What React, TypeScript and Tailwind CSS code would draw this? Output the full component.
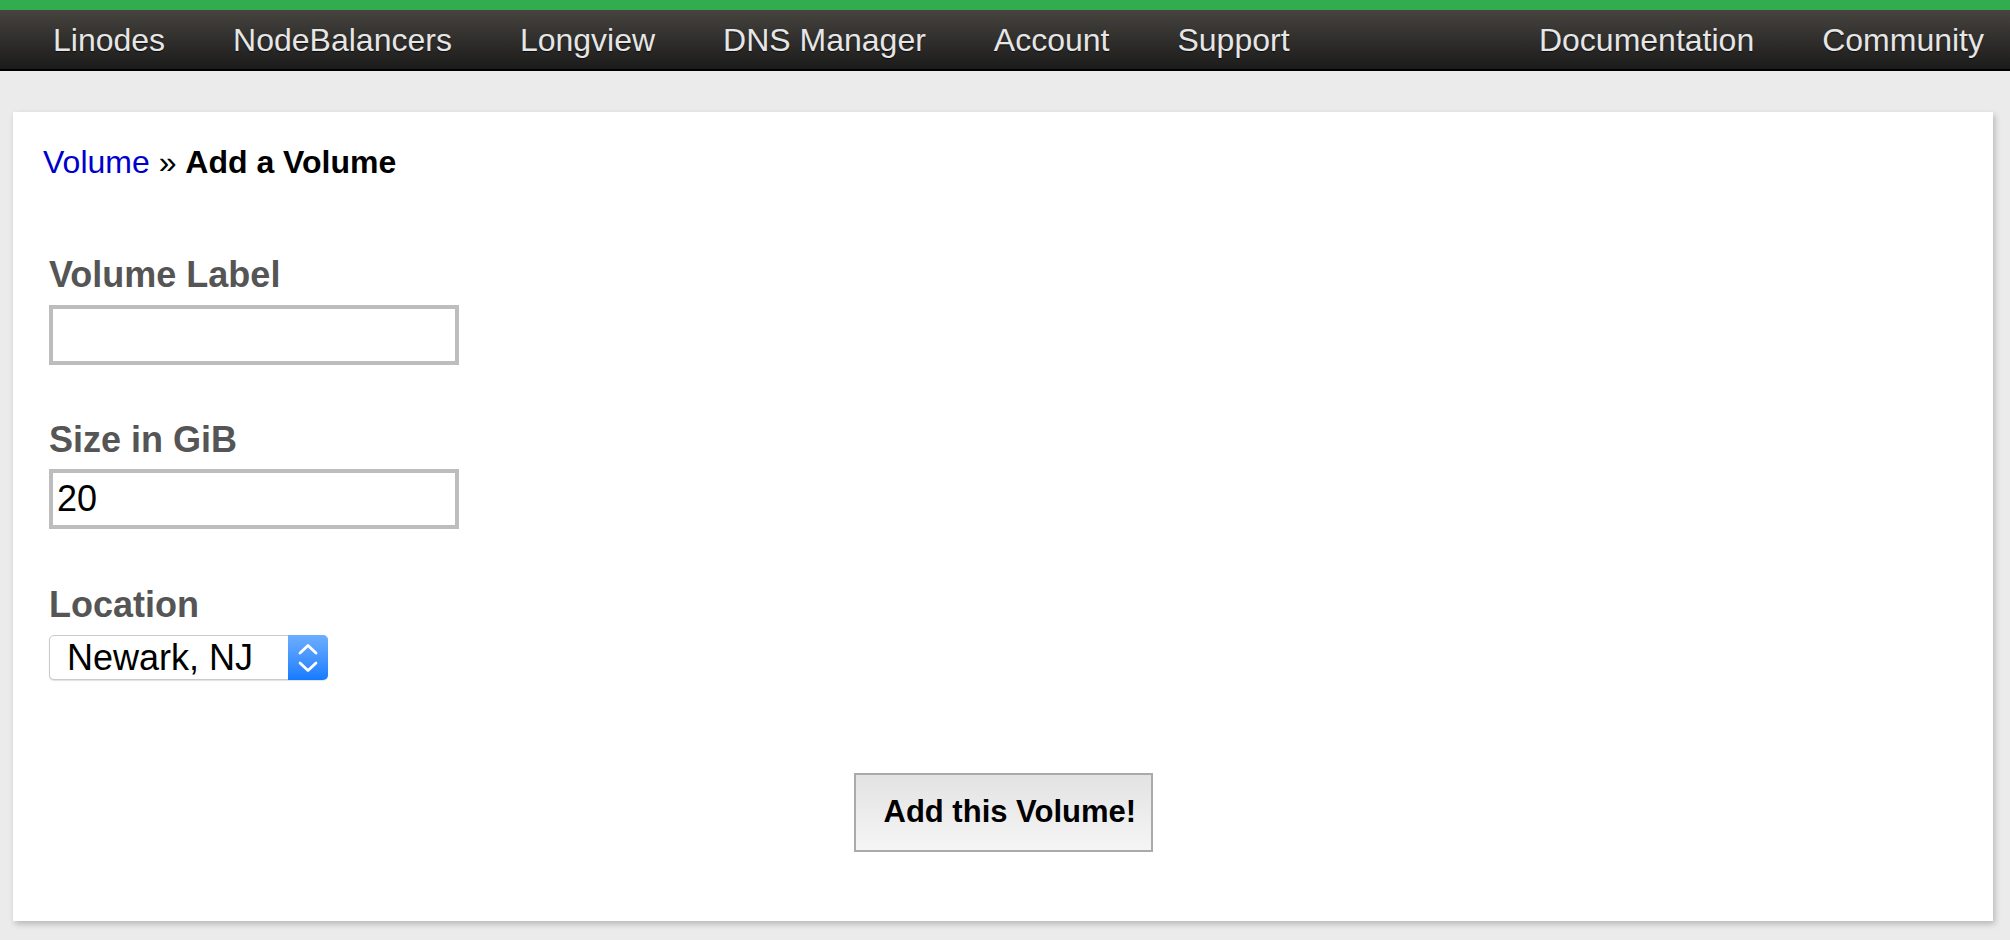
import React from "react";

const navLeft = ["Linodes", "NodeBalancers", "Longview", "DNS Manager", "Account", "Support"];
const navRight = ["Documentation", "Community"];

export default function App() {
  return (
    <div className="min-h-[940px] bg-[#ebebeb] font-['Liberation_Sans',Arial,Helvetica,sans-serif]">
      <div className="h-[10px] bg-[#31ad4f]" />
      <nav className="flex h-[61px] items-center justify-between border-b-2 border-black bg-gradient-to-b from-[#47443f] to-[#1b1b1b] pl-[53px] pr-[26px] text-[32px] leading-[36px] text-[#e6e6e6] [text-shadow:0_1px_1px_rgba(0,0,0,0.7)]">
        <div className="flex gap-[68px]">
          {navLeft.map((n) => (
            <a key={n} className="cursor-pointer whitespace-nowrap">
              {n}
            </a>
          ))}
        </div>
        <div className="flex gap-[68px]">
          {navRight.map((n) => (
            <a key={n} className="cursor-pointer whitespace-nowrap">
              {n}
            </a>
          ))}
        </div>
      </nav>

      <main className="pb-[20px] pl-[13px] pr-[17px] pt-[41px]">
        <div className="flex flex-col bg-white pb-[69px] pl-[30px] pt-[32px] shadow-[2px_3px_6px_rgba(0,0,0,0.22)]">
          <div className="text-[32px] leading-[36px] text-black">
            <a className="cursor-pointer text-[#0000cc]">Volume</a>
            <span> » </span>
            <span className="font-bold">Add a Volume</span>
          </div>

          <div className="ml-[6px] mt-[75px] flex flex-col">
            <label className="mb-[10px] text-[36px] font-bold leading-[40px] text-[#555555]">Volume Label</label>
            <input
              type="text"
              className="h-[60px] w-[410px] border-4 border-[#bdbdbd] bg-white px-[4px] text-[36px] text-black outline-none"
            />

            <label className="mb-[9px] mt-[55px] text-[36px] font-bold leading-[40px] text-[#555555]">Size in GiB</label>
            <input
              type="text"
              defaultValue="20"
              className="h-[60px] w-[410px] border-4 border-[#bdbdbd] bg-white px-[4px] text-[36px] text-black outline-none"
            />

            <label className="mb-[10px] mt-[56px] text-[36px] font-bold leading-[40px] text-[#555555]">Location</label>
            <div className="flex h-[45px] w-[279px] rounded-[5px] border border-[#cacaca] bg-white shadow-[0_1px_1px_rgba(0,0,0,0.12)]">
              <span className="flex-1 pl-[17px] text-[36px] leading-[43px] text-black">Newark, NJ</span>
              <span className="-my-px -mr-px flex w-[40px] items-center justify-center rounded-r-[5px] bg-gradient-to-b from-[#6daeff] to-[#127bff]">
                <svg width="22" height="34" viewBox="0 0 22 34" fill="none" stroke="white" strokeWidth="2.8" strokeLinecap="round" strokeLinejoin="round">
                  <path d="M3 12 L11 4.5 L19 12" />
                  <path d="M3 22 L11 29.5 L19 22" />
                </svg>
              </span>
            </div>
          </div>

          <div className="mt-[93px] flex justify-center pr-[30px]">
            <button className="h-[79px] w-[299px] border-2 border-[#aaaaaa] bg-gradient-to-b from-[#e3e3e3] to-[#f5f5f5] pl-[28px] pr-[8px] text-left text-[31px] font-bold text-black">
              Add this Volume!
            </button>
          </div>
        </div>
      </main>
    </div>
  );
}
